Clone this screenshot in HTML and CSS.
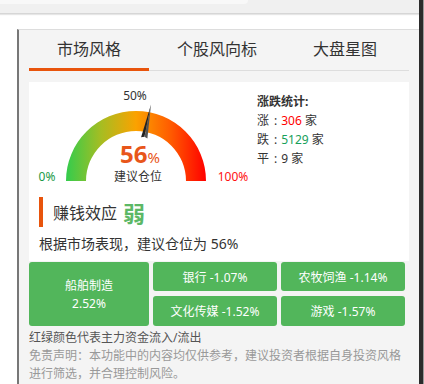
FILE: index.html
```html
<!DOCTYPE html>
<html lang="zh-CN">
<head>
    <meta charset="UTF-8">
    <meta name="viewport" content="width=device-width, initial-scale=1.0">
    <title>市场风格</title>
    <link rel="stylesheet" href="styles.css">
</head>
<body>

    <div class="topbar">
        <div class="search"></div>
    </div>

    <div class="panel">
        <div class="tabs">
            <div class="tab active">市场风格</div>
            <div class="tab">个股风向标</div>
            <div class="tab">大盘星图</div>
        </div>

        <div class="card">
            <div class="overview">
                <svg class="gauge" width="228" height="108" viewBox="0 0 228 108">
                    <defs>
                        <linearGradient id="arc-fill" x1="37" y1="0" x2="177" y2="0" gradientUnits="userSpaceOnUse">
                            <stop offset="0" stop-color="#33cc4d"/>
                            <stop offset="0.25" stop-color="#a6bd22"/>
                            <stop offset="0.5" stop-color="#fba200"/>
                            <stop offset="0.75" stop-color="#ff5a00"/>
                            <stop offset="1" stop-color="#ff0000"/>
                        </linearGradient>
                    </defs>
                    <path d="M37 99 A70 70 0 0 1 177 99 L157 99 A50 50 0 0 0 57 99 Z" fill="url(#arc-fill)"/>
                    <g transform="translate(107 99) rotate(10.8)">
                        <polygon points="-3.2,-44 0,-45 0.4,-78" fill="#222"/>
                        <polygon points="0,-45 3.2,-44 0.4,-78" fill="#555"/>
                    </g>
                    <text x="106" y="18" class="g-mark">50%</text>
                    <text x="111" y="81" class="g-value">56<tspan class="g-unit">%</tspan></text>
                    <text x="109" y="99" class="g-label">建议仓位</text>
                    <text x="18" y="99" class="g-min">0%</text>
                    <text x="204" y="99" class="g-max">100%</text>
                </svg>

                <div class="stats">
                    <p class="stats-title">涨跌统计:</p>
                    <p>涨<span class="colon">:</span><span class="up">306</span> 家</p>
                    <p>跌<span class="colon">:</span><span class="down">5129</span> 家</p>
                    <p>平<span class="colon">:</span>9 家</p>
                </div>
            </div>

            <div class="effect">
                <span>赚钱效应</span>
                <span class="effect-level">弱</span>
            </div>
            <p class="advice">根据市场表现，建议仓位为 56%</p>
        </div>

        <div class="sectors">
            <div class="sector big">船舶制造<br>2.52%</div>
            <div class="sector">银行 -1.07%</div>
            <div class="sector">农牧饲渔 -1.14%</div>
            <div class="sector">文化传媒 -1.52%</div>
            <div class="sector">游戏 -1.57%</div>
        </div>

        <p class="legend">红绿颜色代表主力资金流入/流出</p>
        <p class="disclaimer">免责声明：本功能中的内容均仅供参考，建议投资者根据自身投资风格进行筛选，并合理控制风险。</p>
    </div>

    <div class="scrollbar"></div>

</body>
</html>
```

FILE: styles.css
```css
/* General styles */
body {
    margin: 0;
    background-color: #fff;
    font-family: "Noto Sans", "Noto Sans CJK SC", sans-serif;
    color: #333;
    overflow: hidden;
}

p {
    margin: 0;
}

.colon {
    margin: 0 4px 0 5px;
}

.topbar {
    height: 13px;
    background-color: #f0f0f0;
    border-bottom: 1px solid #d6d6d6;
    box-shadow: 0 1px 1px #e6e6e6;
}

.search {
    width: 248px;
    height: 4px;
    background-color: #f8f8f8;
    border-bottom-right-radius: 8px;
}

.panel {
    margin: 15px 0 0 17px;
    width: 380px;
    min-height: 360px;
    padding: 0 10px;
    background-color: #f4f4f4;
    border-left: 2px solid #777;
    border-top: 1px solid #ddd;
}

/* Tabs */
.tabs {
    display: flex;
    gap: 8px;
    height: 40px;
    border-bottom: 1px solid #ddd;
}

.tab {
    width: 120px;
    font-size: 16px;
    line-height: 38px;
    text-align: center;
    color: #333;
}

.tab.active {
    border-bottom: 3px solid #e8540c;
    margin-bottom: -1px;
}

/* Gauge card */
.card {
    margin-top: 11px;
    padding: 0 10px 7px;
    background-color: #fff;
}

.overview {
    display: flex;
    margin-left: -10px;
}

.gauge text {
    font-family: "Noto Sans", "Noto Sans CJK SC", sans-serif;
    font-size: 12px;
    text-anchor: middle;
}

.g-mark,
.g-label {
    fill: #333;
}

.g-value {
    font-size: 24px !important;
    font-weight: bold;
    fill: #e8561a;
}

.g-unit {
    font-size: 15px;
    font-weight: normal;
}

.g-min {
    fill: #1a9a48;
}

.g-max {
    fill: #ff1010;
}

.stats {
    padding-top: 10px;
    font-size: 12px;
    line-height: 19px;
}

.stats-title {
    font-weight: bold;
}

.up {
    color: #ff0000;
}

.down {
    color: #17a05a;
}

.effect {
    display: flex;
    align-items: center;
    gap: 6px;
    height: 30px;
    margin-top: 7px;
    padding-left: 10px;
    border-left: 4px solid #e8540c;
    font-size: 16px;
}

.effect-level {
    font-size: 22px;
    font-weight: bold;
    color: #5cb866;
}

.advice {
    margin-top: 7px;
    font-size: 14px;
    line-height: 20px;
}

/* Sector blocks */
.sectors {
    display: grid;
    grid-template-columns: 120px 124px 124px;
    grid-template-rows: 29px 30px;
    column-gap: 4px;
    row-gap: 5px;
    margin-top: 1px;
}

.sector {
    display: flex;
    align-items: center;
    justify-content: center;
    text-align: center;
    background-color: #52b65b;
    border-radius: 3px;
    color: #fff;
    font-size: 12px;
}

.sector.big {
    grid-row: 1 / 3;
    line-height: 18px;
    padding-top: 2px;
}

.legend {
    margin-top: 3px;
    font-size: 12px;
    line-height: 18px;
    color: #555;
}

.disclaimer {
    font-size: 12px;
    line-height: 18px;
    color: #999;
}

.scrollbar {
    position: fixed;
    top: 0;
    right: 0;
    width: 4px;
    height: 100%;
    background-color: #2b2b2b;
    border-right: 1px solid #9a9a9a;
}
```
